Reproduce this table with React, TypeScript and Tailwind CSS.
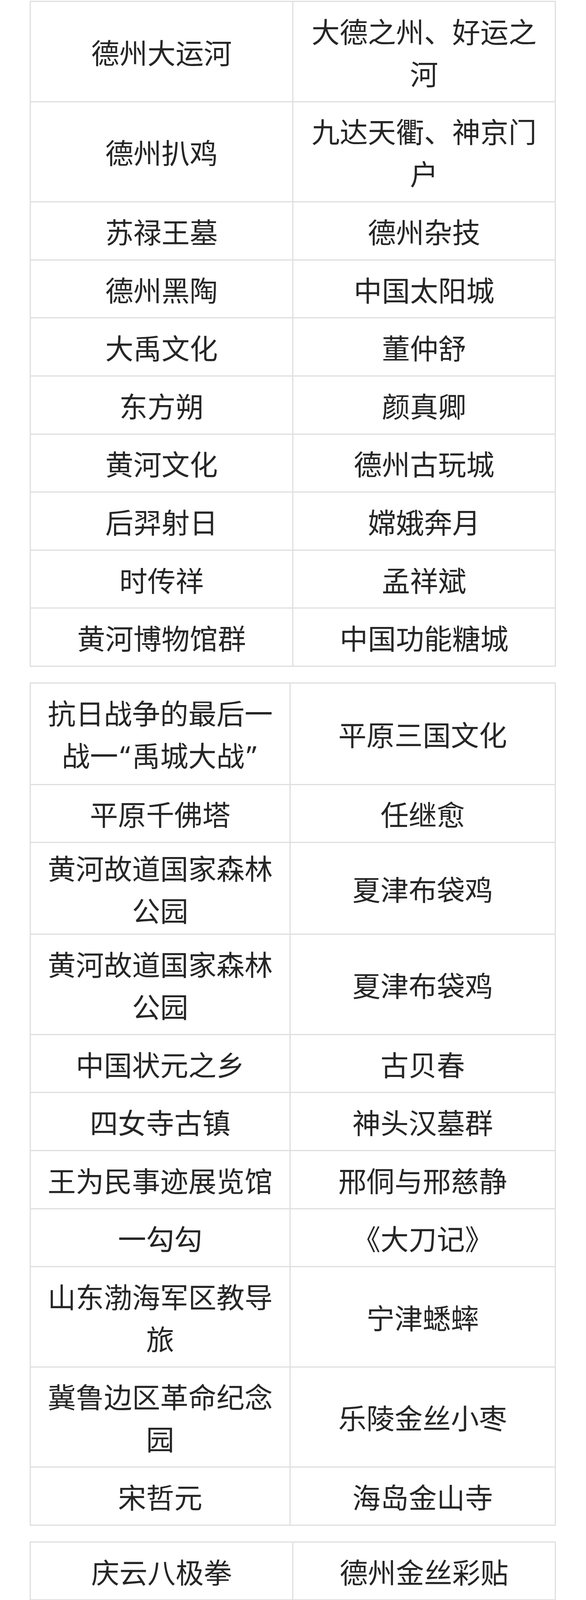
import React from "react";

type Row = [React.ReactNode, React.ReactNode];

const Q = ({ c }: { c: string }) => (
  <span className="px-[5px]" style={{ fontFamily: '"Noto Sans", sans-serif' }}>
    {c}
  </span>
);

const T1: Row[] = [
  ["德州大运河", "大德之州、好运之河"],
  ["德州扒鸡", "九达天衢、神京门户"],
  ["苏禄王墓", "德州杂技"],
  ["德州黑陶", "中国太阳城"],
  ["大禹文化", "董仲舒"],
  ["东方朔", "颜真卿"],
  ["黄河文化", "德州古玩城"],
  ["后羿射日", "嫦娥奔月"],
  ["时传祥", "孟祥斌"],
  ["黄河博物馆群", "中国功能糖城"],
];

const T2: Row[] = [
  [
    <>
      <span>抗日战争的最后一</span>
      <wbr />
      <span>战一</span>
      <Q c="“" />
      <span>禹城大战</span>
      <Q c="”" />
    </>,
    "平原三国文化",
  ],
  ["平原千佛塔", "任继愈"],
  ["黄河故道国家森林公园", "夏津布袋鸡"],
  ["黄河故道国家森林公园", "夏津布袋鸡"],
  ["中国状元之乡", "古贝春"],
  ["四女寺古镇", "神头汉墓群"],
  ["王为民事迹展览馆", "邢侗与邢慈静"],
  ["一勾勾", "《大刀记》"],
  ["山东渤海军区教导旅", "宁津蟋蟀"],
  ["冀鲁边区革命纪念园", "乐陵金丝小枣"],
  ["宋哲元", "海岛金山寺"],
];

const T3: Row[] = [
  ["庆云八极拳", "德州金丝彩贴"],
  ["德州窑红绿彩", "庆云唐枣树"],
  ["田雯", "德州剪纸"],
  ["平原义和团", "平原龙门石刻"],
  ["马堤吹腔", "运河船工号子"],
];

function Cell({ text, tight }: { text: React.ReactNode; tight?: boolean }) {
  return (
    <div
      className={
        tight
          ? "flex items-center justify-center border-r-[3px] border-b-[3px] border-[#dfdfdf] px-[26px] py-[8px] text-center leading-[108px]"
          : "flex items-center justify-center border-r-[3px] border-b-[3px] border-[#dfdfdf] px-[26px] py-[18.8px] text-center leading-[108px]"
      }
    >
      <span className="block">{text}</span>
    </div>
  );
}

function Table({ rows, cols, tightRow }: { rows: Row[]; cols: string; tightRow?: number }) {
  return (
    <div className={`ml-[76px] w-[1347px] border-l-[3px] border-t-[3px] border-[#dfdfdf] grid ${cols}`}>
      {rows.map((r, i) => (
        <React.Fragment key={i}>
          <Cell text={r[0]} tight={i === tightRow} />
          <Cell text={r[1]} tight={i === tightRow} />
        </React.Fragment>
      ))}
    </div>
  );
}

export default function App() {
  return (
    <div
      className="w-[1500px] h-[4694px] overflow-hidden bg-white pt-[2px] text-[72px] text-[#262626]"
      style={{ fontFamily: '"Noto Sans CJK SC", "Noto Sans", sans-serif' }}
    >
      <Table rows={T1} cols="grid-cols-[672px_672px]" />
      <div className="h-[40px]" />
      <Table rows={T2} cols="grid-cols-[665px_679px]" tightRow={2} />
      <div className="h-[40px]" />
      <Table rows={T3} cols="grid-cols-[672px_672px]" />
    </div>
  );
}
